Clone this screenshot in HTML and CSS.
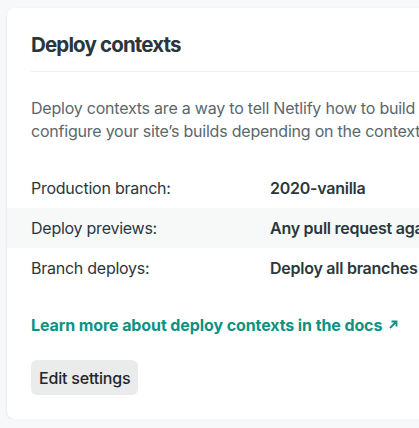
FILE: index.html
```html
<!DOCTYPE html>
<html>
<head>
<meta charset="utf-8">
<link rel="stylesheet" href="styles.css">
</head>
<body>
<section class="card">
  <h2 class="title">Deploy contexts</h2>
  <p class="desc">Deploy contexts are a way to tell Netlify how to build your site. They give you the flexibility to<br>configure your site’s builds depending on the context they are going to be deployed to.</p>
  <dl class="rows">
    <div class="row"><dt>Production branch:</dt><dd>2020-vanilla</dd></div>
    <div class="row alt"><dt>Deploy previews:</dt><dd>Any pull request against your production branch / branch deploy branches</dd></div>
    <div class="row"><dt>Branch deploys:</dt><dd>Deploy all branches pushed to the repository</dd></div>
  </dl>
  <a class="link" href="#">Learn more about deploy contexts in the docs <svg class="arrow" width="11" height="11" viewBox="0 0 11 11"><path d="M2 9L8.5 2.5M3.5 2.5H8.5V7.5" fill="none" stroke="currentColor" stroke-width="1.8"/></svg></a>
  <div class="actions"><button class="btn">Edit settings</button></div>
</section>
</body>
</html>
```
FILE: styles.css
```css
html, body {
  margin: 0;
  padding: 0;
  background: #f6f8f9;
  overflow: hidden;
  font-family: Inter, "Noto Sans", sans-serif;
}
.card {
  margin: 8px 0 0 7px;
  width: 700px;
  background: #fff;
  border-radius: 8px;
  box-shadow: 0 1px 3px rgba(20, 40, 50, 0.10);
  padding: 24px 0 24px 0;
}
.title {
  margin: 0 24px;
  font-size: 20.5px;
  line-height: 26px;
  font-weight: 700;
  letter-spacing: -0.85px;
  color: #29363c;
  padding-bottom: 13px;
  border-bottom: 1px solid #eceff0;
}
.desc {
  margin: 25px 24px 0;
  font-size: 16px;
  line-height: 23px;
  letter-spacing: -0.22px;
  color: #5b676d;
  white-space: nowrap;
}
.rows {
  margin: 25px 0 0;
}
.row {
  display: grid;
  grid-template-columns: 239px 1fr;
  padding: 0 24px;
  height: 40px;
  align-items: center;
  font-size: 16px;
  letter-spacing: -0.25px;
  color: #2b373d;
  white-space: nowrap;
}
.row.alt {
  background: #f7f9f9;
}
.row dt {
  font-weight: 400;
}
.row dd {
  margin: 0;
  font-weight: 600;
}
.link {
  display: inline-flex;
  align-items: center;
  gap: 6px;
  margin: 27px 24px 0;
  font-size: 16px;
  font-weight: 700;
  letter-spacing: -0.1px;
  color: #0a9383;
  text-decoration: none;
}
.arrow {
  margin-top: -2px;
}
.actions {
  margin: 25px 24px 0;
}
.btn {
  font-family: Inter, "Noto Sans", sans-serif;
  font-size: 16px;
  font-weight: 500;
  letter-spacing: -0.2px;
  color: #1e272b;
  background: #eaebeb;
  border: none;
  border-radius: 6px;
  height: 35px;
  padding: 0 8px;
}
```
